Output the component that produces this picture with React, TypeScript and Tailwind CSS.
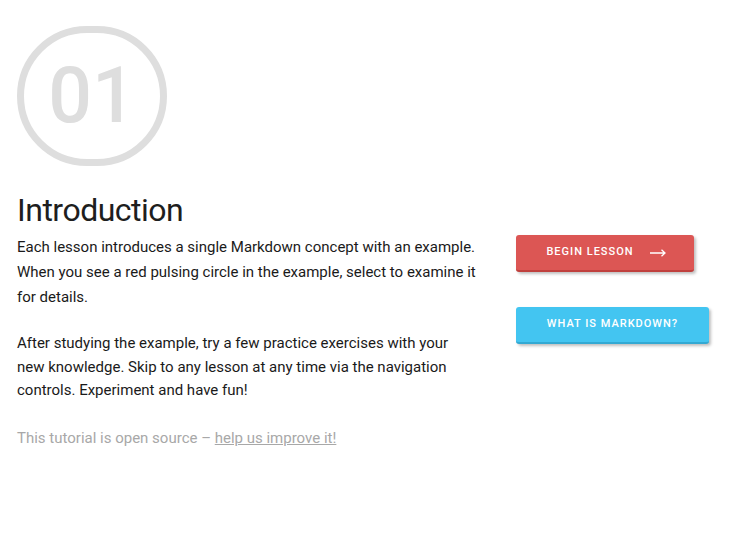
export default function App() {
  return (
    <div className="min-h-[536px] w-[732px] bg-white text-[#222] font-['Roboto',sans-serif]">
      <div className="pl-[17px] pt-[26px]">
        <div className="flex h-[140px] w-[150px] items-center justify-center rounded-full border-[7px] border-[#dedede]">
          <span className="text-[77px] font-medium leading-none text-[#dedede] tracking-[0px]">01</span>
        </div>
      </div>
      <div className="flex pl-[17px] pt-[26px]">
        <div className="w-[470px]">
          <h1 className="text-[32px] font-normal leading-[36px] tracking-[-0.5px] text-[#1e1e1e]">Introduction</h1>
          <p className="mt-[7px] text-[15px] leading-[25px] text-[#1a1a1a]">
            Each lesson introduces a single Markdown concept with an example. When you see a red pulsing circle in the example, select to examine it for details.
          </p>
          <p className="mt-[22px] w-[440px] text-[15px] leading-[23.5px] text-[#1a1a1a]">
            After studying the example, try a few practice exercises with your new knowledge. Skip to any lesson at any time via the navigation controls. Experiment and have fun!
          </p>
          <p className="mt-[23px] text-[15px] leading-[24px] text-[#a8a8a8]">
            This tutorial is open source – <span className="underline">help us improve it!</span>
          </p>
        </div>
        <div className="ml-[29px] flex flex-col items-start pt-[43px]">
          <button className="flex h-[37px] w-[178px] items-center justify-center gap-[16px] rounded-[3px] border-b-2 border-[#c0403d] bg-[#dc5654] pl-[2px] text-[11px] font-medium tracking-[1px] text-white shadow-[2px_2px_3px_rgba(0,0,0,0.25)]">
            <span>BEGIN LESSON</span>
            <svg width="16" height="8" viewBox="0 0 16 8" fill="none" stroke="white" strokeWidth="1.3">
              <path d="M0 4h15M11.5 0.8L15 4l-3.5 3.2" />
            </svg>
          </button>
          <button className="mt-[35px] flex h-[37px] w-[193px] items-center justify-center rounded-[3px] border-b-2 border-[#33a9d3] bg-[#43c5f1] text-[11px] font-medium tracking-[1px] text-white shadow-[2px_2px_3px_rgba(0,0,0,0.25)]">
            WHAT IS MARKDOWN?
          </button>
        </div>
      </div>
    </div>
  );
}
